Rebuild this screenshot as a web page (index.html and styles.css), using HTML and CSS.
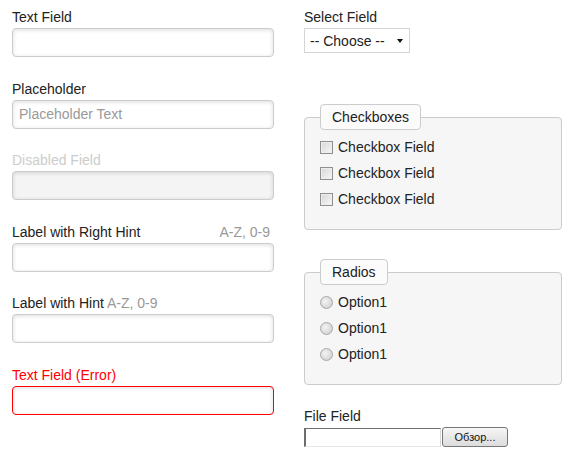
FILE: index.html
```html
<!DOCTYPE html>
<html>
<head>
  <title>Form Elements</title>
  <link rel="stylesheet" href="styles.css">
</head>
<body>
  <form class="form-grid">
    <div class="col">
      <div class="form-group">
        <label for="text">Text Field</label>
        <input type="text" id="text">
      </div>
      <div class="form-group">
        <label for="placeholder">Placeholder</label>
        <input type="text" id="placeholder" placeholder="Placeholder Text">
      </div>
      <div class="form-group disabled">
        <label for="disabled">Disabled Field</label>
        <input type="text" id="disabled" disabled>
      </div>
      <div class="form-group">
        <label for="right-hint" class="label-split">Label with Right Hint <span class="hint right">A-Z, 0-9</span></label>
        <input type="text" id="right-hint">
      </div>
      <div class="form-group">
        <label for="hint">Label with Hint <span class="hint">A-Z, 0-9</span></label>
        <input type="text" id="hint">
      </div>
      <div class="form-group error">
        <label for="error">Text Field (Error)</label>
        <input type="text" id="error">
      </div>
    </div>

    <div class="col">
      <div class="form-group">
        <label for="select">Select Field</label>
        <span class="select-wrap">
          <select id="select">
            <option>-- Choose --</option>
          </select>
        </span>
      </div>

      <fieldset class="box checks">
        <legend>Checkboxes</legend>
        <label class="option"><input type="checkbox"> Checkbox Field</label>
        <label class="option"><input type="checkbox"> Checkbox Field</label>
        <label class="option"><input type="checkbox"> Checkbox Field</label>
      </fieldset>

      <fieldset class="box radios">
        <legend>Radios</legend>
        <label class="option"><input type="radio" name="opt"> Option1</label>
        <label class="option"><input type="radio" name="opt"> Option1</label>
        <label class="option"><input type="radio" name="opt"> Option1</label>
      </fieldset>

      <div class="form-group file-group">
        <label>File Field</label>
        <div class="file-input">
          <span class="file-path"></span>
          <button type="button" class="file-btn">Обзор...</button>
        </div>
      </div>
    </div>
  </form>
</body>
</html>
```

FILE: styles.css
```css
body {
  font-family: "Liberation Sans", Arial, sans-serif;
  font-size: 14px;
  color: #222;
  margin: 0;
  padding: 8px 12px;
}

.form-grid {
  display: grid;
  grid-template-columns: 262px 258px;
  column-gap: 30px;
}

.form-group {
  margin-bottom: 22.6px;
}

.form-group label {
  display: block;
  line-height: 18px;
  margin-bottom: 2px;
}

.label-split {
  display: flex !important;
  justify-content: space-between;
}

.hint {
  color: #999;
}

.hint.right {
  padding-right: 4px;
}

input[type="text"] {
  display: block;
  box-sizing: border-box;
  width: 100%;
  height: 29px;
  padding: 0 6px;
  font-family: inherit;
  font-size: 14px;
  color: #222;
  background: #fff;
  border: 1px solid #ccc;
  border-radius: 4px;
  box-shadow: inset 0 1px 4px rgba(0, 0, 0, 0.14);
  outline: none;
}

input[type="text"]::placeholder {
  color: #999;
}

.disabled label {
  color: #ccc;
}

.disabled input[type="text"] {
  background: #f4f4f4;
}

.error label {
  color: #f00;
}

.error input[type="text"] {
  border-color: #f00;
}

.select-wrap {
  position: relative;
  display: inline-block;
}

.select-wrap select {
  appearance: none;
  -webkit-appearance: none;
  box-sizing: border-box;
  width: 106px;
  height: 25px;
  padding: 0 5px;
  font-family: inherit;
  font-size: 14px;
  color: #222;
  background: #fff;
  border: 1px solid #d5d5d5;
  border-radius: 0;
  outline: none;
}

.select-wrap::after {
  content: "";
  position: absolute;
  top: 11px;
  left: 93px;
  border-left: 3.5px solid transparent;
  border-right: 3.5px solid transparent;
  border-top: 4px solid #111;
  pointer-events: none;
}

.box {
  margin: 0;
  min-width: 0;
  padding: 4px 15px 17px;
  background: #f6f6f6;
  border: 1px solid #ccc;
  border-radius: 4px;
}

.box legend {
  padding: 4px 11px;
  line-height: 16px;
  background: #fbfbfb;
  border: 1px solid #ccc;
  border-radius: 4px;
}

.checks {
  margin-top: 51px;
}

.radios {
  margin-top: 29px;
}

.option {
  display: flex;
  align-items: center;
  height: 26px;
}

.option input {
  appearance: none;
  -webkit-appearance: none;
  box-sizing: border-box;
  width: 13px;
  height: 13px;
  margin: 0 5px 0 0;
}

.option input[type="checkbox"] {
  border: 1px solid #8e8f8f;
  background: linear-gradient(135deg, #d6d6d6, #f7f7f7);
  box-shadow: inset 0 0 0 1px #eee;
}

.option input[type="radio"] {
  border: 1px solid #a8a8a8;
  border-radius: 50%;
  background: radial-gradient(circle at 40% 40%, #f4f4f4, #c9c9c9);
}

.file-group {
  margin-top: 22px;
}

.file-input {
  display: flex;
  align-items: center;
}

.file-path {
  box-sizing: border-box;
  width: 137px;
  height: 19px;
  background: #fff;
  border-top: 1px solid #6d6d6d;
  border-left: 2px solid #6d6d6d;
  border-bottom: 1px solid #e6e6e6;
  border-right: 1px solid #d8d8d8;
}

.file-btn {
  box-sizing: border-box;
  width: 66px;
  height: 20px;
  margin-left: 1px;
  padding: 0;
  font-family: inherit;
  font-size: 11px;
  color: #111;
  background: linear-gradient(#f6f6f6, #dcdcdc);
  border: 1px solid #777;
  border-radius: 3px;
}
```
